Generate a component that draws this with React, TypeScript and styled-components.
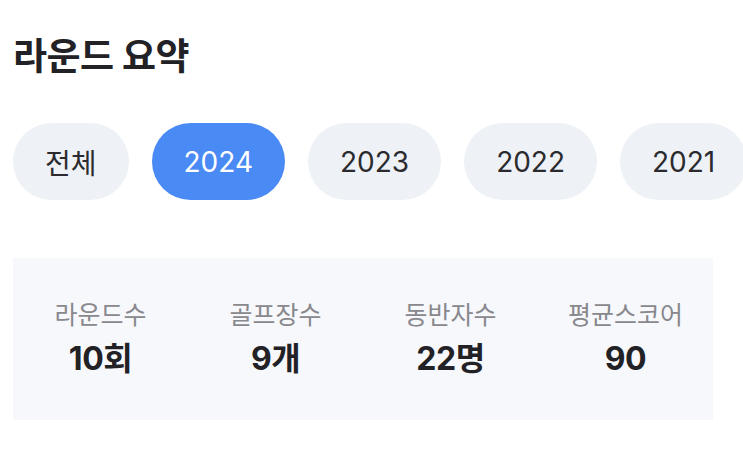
import styled, { createGlobalStyle } from 'styled-components';

interface ChipProps {
  active: boolean;
}

const GlobalStyle = createGlobalStyle`
  * {
    box-sizing: border-box;
  }
  body {
    margin: 0;
    background: #ffffff;
    font-family: Inter, 'Noto Sans CJK KR', sans-serif;
  }
`;

const Wrapper = styled.div`
  width: 743px;
  height: 459px;
  overflow: hidden;
  padding: 33px 0 0 13px;
  display: flex;
  flex-direction: column;
`;

const Title = styled.h1`
  margin: 0;
  font-size: 37px;
  line-height: 48px;
  font-weight: 700;
  color: #222226;
  letter-spacing: -0.5px;
`;

const ChipRow = styled.div`
  display: flex;
  flex-direction: row;
  gap: 23px;
  margin-top: 42px;
`;

const Chip = styled.button<ChipProps>`
  flex-shrink: 0;
  height: 77px;
  padding: 0 32px;
  border: none;
  border-radius: 39px;
  font-family: Inter, 'Noto Sans CJK KR', sans-serif;
  font-size: 28px;
  font-weight: 400;
  background-color: ${props => (props.active ? '#4a8af4' : '#eef1f5')};
  color: ${props => (props.active ? '#ffffff' : '#2b2b2f')};
`;

const SummaryBox = styled.div`
  width: 700px;
  height: 162px;
  margin-top: 58px;
  background-color: #f7f8fc;
  display: grid;
  grid-template-columns: repeat(4, 1fr);
  align-items: center;
`;

const StatItem = styled.div`
  display: flex;
  flex-direction: column;
  align-items: center;
  gap: 10px;
`;

const Label = styled.span`
  font-size: 25px;
  line-height: 30px;
  color: #88888d;
`;

const Value = styled.span`
  font-size: 32px;
  line-height: 38px;
  font-weight: 700;
  color: #222226;
  letter-spacing: -0.5px;
`;

const years = ['전체', '2024', '2023', '2022', '2021'];

const stats = [
  { label: '라운드수', value: '10회' },
  { label: '골프장수', value: '9개' },
  { label: '동반자수', value: '22명' },
  { label: '평균스코어', value: '90' },
];

const App = () => {
  return (
    <Wrapper>
      <GlobalStyle />
      <Title>라운드 요약</Title>
      <ChipRow>
        {years.map(y => (
          <Chip key={y} active={y === '2024'}>
            {y}
          </Chip>
        ))}
      </ChipRow>
      <SummaryBox>
        {stats.map(s => (
          <StatItem key={s.label}>
            <Label>{s.label}</Label>
            <Value>{s.value}</Value>
          </StatItem>
        ))}
      </SummaryBox>
    </Wrapper>
  );
};

export default App;
